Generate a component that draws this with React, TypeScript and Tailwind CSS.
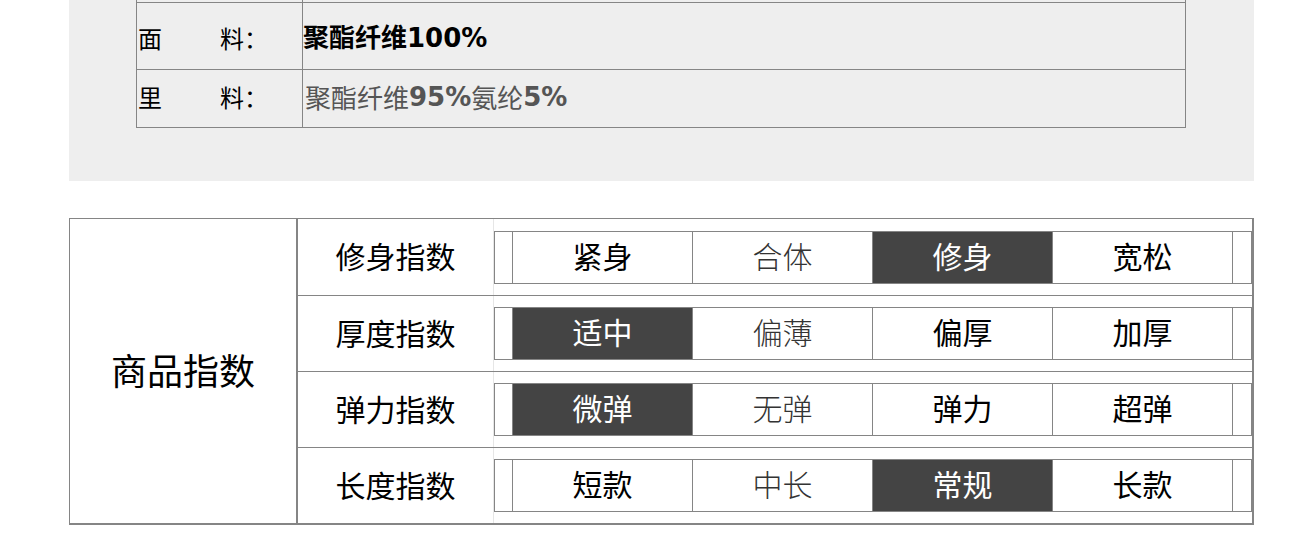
import React from "react";

type Opt = { t: string; sel?: boolean; thin?: boolean };

const rows: { label: string; opts: Opt[]; pt: string; h: string; last?: boolean }[] = [
  {
    label: "修身指数",
    opts: [{ t: "紧身" }, { t: "合体", thin: true }, { t: "修身", sel: true }, { t: "宽松" }],
    pt: "pt-[12px]",
    h: "h-[77px]",
  },
  {
    label: "厚度指数",
    opts: [{ t: "适中", sel: true }, { t: "偏薄", thin: true }, { t: "偏厚" }, { t: "加厚" }],
    pt: "pt-[11px]",
    h: "h-[76px]",
  },
  {
    label: "弹力指数",
    opts: [{ t: "微弹", sel: true }, { t: "无弹", thin: true }, { t: "弹力" }, { t: "超弹" }],
    pt: "pt-[11px]",
    h: "h-[76px]",
  },
  {
    label: "长度指数",
    opts: [{ t: "短款" }, { t: "中长", thin: true }, { t: "常规", sel: true }, { t: "长款" }],
    pt: "pt-[11px]",
    h: "h-[75px]",
    last: true,
  },
];

export default function App() {
  return (
    <div className="w-[1295px] h-[548px] bg-white font-['DejaVu_Sans','Noto_Sans_CJK_SC',sans-serif] text-black">
      <div className="ml-[69px] w-[1185px]">
        {/* Gray material panel */}
        <div className="h-[181px] bg-[#eeeeee] pl-[67px]">
          <div className="w-[1050px] border-x border-[#858585]">
            <div className="flex h-[2px]">
              <div className="w-[166px] border-r border-[#858585]" />
            </div>
            <div className="flex h-[67px] border-t border-[#858585]">
              <div className="w-[166px] border-r border-[#858585] flex items-center pl-[1px] pt-[3px] text-[24px] leading-none font-['Noto_Sans_CJK_SC',sans-serif]">
                <span>面</span>
                <span className="ml-[58px]">料：</span>
              </div>
              <div className="flex-1 flex items-center pt-[3px] text-[26px] leading-none font-bold">
                聚酯纤维100%
              </div>
            </div>
            <div className="flex h-[59px] border-y border-[#858585]">
              <div className="w-[166px] border-r border-[#858585] flex items-center pl-[1px] pb-[3px] text-[24px] leading-none font-['Noto_Sans_CJK_SC',sans-serif]">
                <span>里</span>
                <span className="ml-[58px]">料：</span>
              </div>
              <div className="flex-1 flex items-center pl-[2px] pb-[3px] text-[26px] leading-none text-[#555555]">
                <span className="font-['Noto_Sans_CJK_SC',sans-serif]">聚酯纤维</span>
                <span className="font-bold">95%</span>
                <span className="font-['Noto_Sans_CJK_SC',sans-serif]">氨纶</span>
                <span className="font-bold">5%</span>
              </div>
            </div>
          </div>
        </div>

        <div className="h-[37px]" />

        {/* Product index table */}
        <div className="flex w-[1185px] border-l border-t border-r-2 border-b-2 border-[#858585] font-['Noto_Sans_CJK_SC',sans-serif]">
          <div className="w-[228px] border-r-2 border-[#858585] flex items-center justify-center pb-[4px] text-[36px] leading-none">
            商品指数
          </div>
          <div className="flex-1 flex flex-col">
            {rows.map((r) => (
              <div
                key={r.label}
                className={`flex ${r.h} ${r.last ? "" : "border-b border-[#858585]"}`}
              >
                <div className="w-[196px] border-r border-[#e6e6e6] flex items-center justify-center pb-[4px] text-[30px] leading-none">
                  {r.label}
                </div>
                <div className={`flex-1 ${r.pt}`}>
                  <div className="flex h-[53px] w-[758px] border border-[#858585]">
                    <div className="w-[17px]" />
                    {r.opts.map((o) => (
                      <div
                        key={o.t}
                        className={`w-[180px] border-l border-[#858585] flex items-center justify-center pb-[5px] text-[30px] leading-none ${
                          o.sel ? "bg-[#444444] text-white" : o.thin ? "text-[#333333] font-light" : "text-black"
                        }`}
                      >
                        {o.t}
                      </div>
                    ))}
                    <div className="flex-1 border-l border-[#858585]" />
                  </div>
                </div>
              </div>
            ))}
          </div>
        </div>
      </div>
    </div>
  );
}
